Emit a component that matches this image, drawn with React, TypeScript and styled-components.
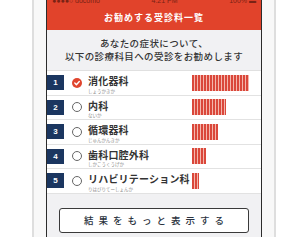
import React from 'react';
import styled, { createGlobalStyle } from 'styled-components';

const Global = createGlobalStyle`
  html, body { margin: 0; padding: 0; background: #ffffff; overflow: hidden; }
  body { font-family: "Noto Sans CJK JP", "Noto Sans", sans-serif; }
`;

const Page = styled.div`
  width: 300px;
  height: 237px;
  overflow: hidden;
  display: flex;
`;

const Phone = styled.div`
  margin-left: 32px;
  width: 244px;
  height: 237px;
  box-sizing: border-box;
  border-left: 2px solid #dedede;
  border-right: 2px solid #dedede;
  background: #f8f8f8;
  padding: 0 12px;
`;

const Screen = styled.div`
  width: 216px;
  height: 237px;
  box-sizing: border-box;
  border-left: 1px solid #2c2c2c;
  border-right: 1px solid #2c2c2c;
  background: #f1f1f3;
  display: flex;
  flex-direction: column;
`;

const Header = styled.div`
  height: 30px;
  background: #e1432b;
  display: flex;
  flex-direction: column;
`;

const StatusBar = styled.div`
  height: 4px;
  overflow: hidden;
  display: flex;
  align-items: flex-end;
  justify-content: space-between;
  padding: 0 5px;
  font-family: "Liberation Sans", sans-serif;
  font-size: 7px;
  line-height: 7px;
  color: #7a2214;
`;

const Title = styled.div`
  flex: 1;
  display: flex;
  align-items: center;
  justify-content: center;
  color: #ffffff;
  font-size: 9px;
  font-weight: 700;
  letter-spacing: 1px;
`;

const Intro = styled.div`
  padding: 7px 0 7px;
  text-align: center;
  font-size: 9.5px;
  line-height: 13px;
  letter-spacing: 0.4px;
  color: #333333;
  font-weight: 500;
`;

const List = styled.div`
  background: #ffffff;
  border-top: 1px solid #e0e0e0;
`;

const Row = styled.div`
  height: 24.5px;
  box-sizing: border-box;
  border-bottom: 1px solid #e2e2e2;
  display: grid;
  grid-template-columns: 25px 16px 1fr 69px;
  align-items: center;
`;

const Badge = styled.div`
  width: 17px;
  height: 15px;
  background: #1b3660;
  color: #ffffff;
  font-family: "Liberation Sans", sans-serif;
  font-weight: 700;
  font-size: 8px;
  display: flex;
  align-items: center;
  justify-content: center;
`;

const Radio = styled.div<{ $on?: boolean }>`
  width: 10px;
  height: 10px;
  box-sizing: border-box;
  border-radius: 50%;
  border: ${(p) => (p.$on ? 'none' : '1px solid #666666')};
  background: ${(p) => (p.$on ? '#e0452e' : '#ffffff')};
  display: flex;
  align-items: center;
  justify-content: center;
`;

const NameCell = styled.div`
  display: flex;
  flex-direction: column;
  gap: 2.5px;
  padding-top: 3px;
`;

const Name = styled.div`
  font-size: 10px;
  line-height: 11px;
  font-weight: 700;
  letter-spacing: 0.2px;
  color: #333333;
  white-space: nowrap;
`;

const Reading = styled.div`
  font-size: 4.5px;
  line-height: 5px;
  color: #8a8a8a;
  white-space: nowrap;
`;

const Bar = styled.div<{ $w: number }>`
  width: ${(p) => p.$w}px;
  height: 16px;
  background: repeating-linear-gradient(90deg, #da473a 0 2px, #f4b6ac 2px 3px);
`;

const Footer = styled.div`
  padding: 14px 12px 0;
`;

const MoreButton = styled.div`
  height: 25px;
  box-sizing: border-box;
  border: 1px solid #3a3a3a;
  border-radius: 3px;
  background: #ffffff;
  display: flex;
  align-items: center;
  justify-content: center;
  padding-left: 5px;
  font-size: 9.5px;
  font-weight: 500;
  letter-spacing: 5px;
  color: #2b3340;
`;

const items = [
  { name: '消化器科', reading: 'しょうかきか', bar: 57, on: true },
  { name: '内科', reading: 'ないか', bar: 34 },
  { name: '循環器科', reading: 'じゅんかんきか', bar: 26 },
  { name: '歯科口腔外科', reading: 'しかこうくうげか', bar: 14 },
  { name: 'リハビリテーション科', reading: 'りはびりてーしょんか', bar: 7 },
];

export default function App() {
  return (
    <Page>
      <Global />
      <Phone>
        <Screen>
          <Header>
            <StatusBar>
              <span>●●●●○ docomo</span>
              <span>4:21 PM</span>
              <span>100% ▬</span>
            </StatusBar>
            <Title>お勧めする受診料一覧</Title>
          </Header>
          <Intro>
            あなたの症状について、
            <br />
            以下の診療科目への受診をお勧めします
          </Intro>
          <List>
            {items.map((it, i) => (
              <Row key={it.name}>
                <Badge>{i + 1}</Badge>
                <Radio $on={it.on}>
                  {it.on && (
                    <svg width="10" height="10" viewBox="0 0 10 10">
                      <path d="M2.8 5.1 L4.4 6.7 L7.3 3.5" fill="none" stroke="#ffffff" strokeWidth="1.4" strokeLinecap="round" strokeLinejoin="round" />
                    </svg>
                  )}
                </Radio>
                <NameCell>
                  <Name>{it.name}</Name>
                  <Reading>{it.reading}</Reading>
                </NameCell>
                <Bar $w={it.bar} />
              </Row>
            ))}
          </List>
          <Footer>
            <MoreButton>結果をもっと表示する</MoreButton>
          </Footer>
        </Screen>
      </Phone>
    </Page>
  );
}
